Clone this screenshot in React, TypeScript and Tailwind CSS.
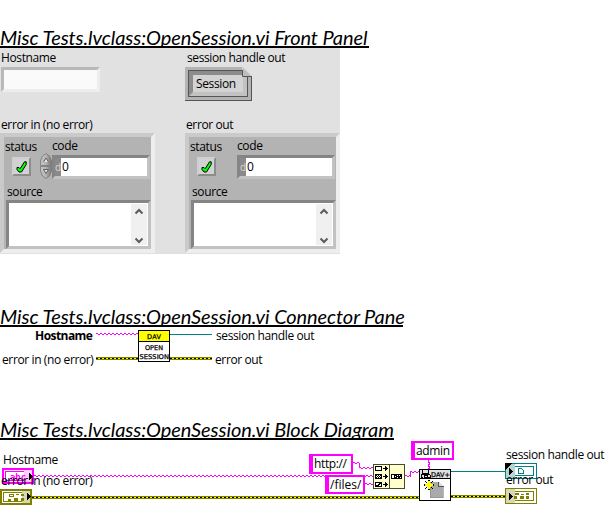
import React from "react";

const label = "block whitespace-pre font-['Open_Sans','Noto_Sans',sans-serif] text-[12px] leading-4 tracking-[-0.38px] text-black";

function Heading({ children, className }: { children: string; className: string }) {
  return (
    <h2
      className={`h-[22px] whitespace-pre border-b-2 border-black font-[Lato,'Open_Sans',sans-serif] text-[20px] italic leading-[23px] tracking-[-0.08px] text-black ${className}`}
    >
      {children}
    </h2>
  );
}

function Check() {
  return (
    <div className="flex h-[19px] w-[19px] items-center justify-center border-2 border-t-[#cfcfcf] border-l-[#cfcfcf] border-r-[#8c8c8c] border-b-[#8c8c8c] bg-[#d2d2d2]">
      <svg width="11" height="12" viewBox="0 0 11 12">
        <path d="M8.500 .8h1.700v2.700L5.500 11H3L1 8.500V6.500h2l1.200 1.200z" fill="#00ff00" stroke="#000" strokeWidth="1" />
      </svg>
    </div>
  );
}

function Spinner() {
  return (
    <svg width="12" height="26" viewBox="0 0 12 26" className="block">
      <defs>
        <linearGradient id="knob">
          <stop offset="0" stopColor="#c4c4c4" />
          <stop offset=".45" stopColor="#b8b8b8" />
          <stop offset="1" stopColor="#757575" />
        </linearGradient>
      </defs>
      <path d="M6 .5 9.500 3l2 5v4.500H.5V8l2-5zM.5 13.500h11V18l-2 5L6 25.500 2.500 23l-2-5z" fill="url(#knob)" stroke="#777" strokeWidth=".8" />
      <path d="M3.500 9 6 5l2.500 4M3.500 16.500h5L6 20.500z" fill="#e2e2e2" stroke="#555" strokeWidth=".9" />
    </svg>
  );
}

function ErrorCluster({ spinner }: { spinner?: boolean }) {
  return (
    <div className="h-[120px] w-[155px] border-4 border-t-[#cacaca] border-l-[#cacaca] border-r-[#eeeeee] border-b-[#eeeeee] bg-[#b3b3b3]">
      <div className="flex h-[45px]">
        <div className="w-9 pl-px pt-[2px]">
          <span className={`${label} tracking-[-0.2px]`}>status</span>
          <div className="pl-[7px] pt-[2px]"><Check /></div>
        </div>
        <div className="w-3 pt-[16px]">{spinner && <Spinner />}</div>
        <div className="w-[98px]">
          <span className={`${label} pt-px tracking-[-0.2px]`}>code</span>
          <div className="mt-px flex h-[24px] w-[98px] border-[3px] border-t-[#858585] border-l-[#858585] border-r-[#c2c2c2] border-b-[#c2c2c2] bg-white">
            <span className="h-full w-[6px] bg-[#8a8a8a] font-['Open_Sans',sans-serif] text-[10px] leading-[18px] text-[#d8d8d8]">d</span>
            <span className={`${label} pl-px leading-[18px]`}>0</span>
          </div>
        </div>
      </div>
      <span className={`${label} pl-[3px] pt-[2px] tracking-[-0.2px]`}>source</span>
      <div className="ml-[2px] flex h-[49px] w-[145px] justify-end border-[3px] border-t-[#858585] border-l-[#858585] border-r-[#c2c2c2] border-b-[#c2c2c2] bg-white py-px pr-px">
        <svg width="16" height="41" viewBox="0 0 16 41" className="block">
          <path d="M0 0h16v41H0z" fill="#f0f0f0" />
          <path d="M4.500 9.500 8 6l3.500 3.500M4.500 34.500 8 38l3.500-3.500" fill="none" stroke="#5c5c5c" strokeWidth="2" />
        </svg>
      </div>
    </div>
  );
}

function FrontPanel() {
  return (
    <div className="flex h-[206px] w-[340px] bg-[#e1e1e1]">
      <div className="w-[185px]">
        <span className={`${label} pl-px pt-[2px] tracking-[-0.3px]`}>Hostname</span>
        <div className="ml-px mt-px h-[25px] w-[99px] border-[3px] border-t-[#b8b8b8] border-l-[#b8b8b8] border-r-[#ededed] border-b-[#ededed] bg-[#fafafa]" />
        <span className={`${label} mt-[25px] pl-px`}>error in (no error)</span>
        <ErrorCluster spinner />
      </div>
      <div className="w-[155px]">
        <span className={`${label} pl-[2px] pt-[2px]`}>session handle out</span>
        <div className="relative mt-px h-[34px] w-[67px] border-b border-r border-[#555] bg-[#b3b3b3] p-[3px]">
          <div className="h-full w-full border border-[#555] bg-[#d3d3d3]">
            <div className="h-full w-full border-[4px] border-t-[#8c8c8c] border-l-[#8c8c8c] border-r-[#c2c2c2] border-b-[#c2c2c2]">
              <span className={`${label} pl-[3px] leading-[17px]`}>Session</span>
            </div>
          </div>
          <svg width="10" height="10" viewBox="0 0 10 10" className="absolute right-[-1px] top-0">
            <path d="M0 0h10v10H0z" fill="#e1e1e1" />
            <path d="M.5 0v9.500H10z" fill="#bdbdbd" />
            <path d="M.5 3v6.500H10" fill="none" stroke="#555" />
          </svg>
        </div>
        <span className={`${label} mt-[16px] pl-px`}>error out</span>
        <ErrorCluster />
      </div>
    </div>
  );
}

function Patterns() {
  return (
    <defs>
      <pattern id="err" width="4" height="3" patternUnits="userSpaceOnUse">
        <path d="M0 0h4v3H0z" fill="#808000" />
        <path d="M0 1h2v1H0z" fill="#000" />
        <path d="M2 1h2v1H2z" fill="#ff0" />
      </pattern>
      <pattern id="str" width="4" height="2" patternUnits="userSpaceOnUse">
        <path d="M0 0h2v1H0zM2 1h2v1H2z" fill="#f0f" />
      </pattern>
    </defs>
  );
}

function ErrWire({ x, y, w }: { x: number; y: number; w: number }) {
  return <rect width={w} height="3" transform={`translate(${x} ${y})`} fill="url(#err)" />;
}

function StrWire({ x, y, w }: { x: number; y: number; w: number }) {
  return <rect width={w} height="2" transform={`translate(${x} ${y})`} fill="url(#str)" />;
}

const tiny = "font-['DejaVu_Sans',sans-serif]";

function ConnectorPane() {
  return (
    <div className="flex h-[40px] pt-px">
      <div className="flex w-[96px] flex-col gap-2 pl-[2px]">
        <span className={`${label} pl-[33px] font-bold tracking-[-0.55px]`}>Hostname</span>
        <span className={label}>error in (no error)</span>
      </div>
      <svg width="116" height="39" viewBox="96 1 116 39" className="block shrink-0" shapeRendering="crispEdges">
        <Patterns />
        <StrWire x={96} y={6} w={42} />
        <path d="M170 7.500h42" stroke="#008080" />
        <ErrWire x={96} y={30} w={42} />
        <ErrWire x={170} y={30} w={42} />
        <path d="M138.500 3.500h31v31h-31z" fill="#fff" stroke="#000" />
        <path d="M139 4h30v10h-30z" fill="#ff0" />
        <path d="M139 14.500h30" stroke="#000" />
        <text x="147" y="12" textLength="14" stroke="#000" strokeWidth=".25" className={`${tiny} text-[6.5px]`}>DAV</text>
        <text x="145" y="23" textLength="18" stroke="#000" strokeWidth=".25" className={`${tiny} text-[6.5px]`}>OPEN</text>
        <text x="139.500" y="32" textLength="29.500" lengthAdjust="spacingAndGlyphs" stroke="#000" strokeWidth=".25" className={`${tiny} text-[6.5px]`}>SESSION</text>
      </svg>
      <div className="flex flex-col gap-2 pl-[3px]">
        <span className={`${label} pl-px`}>session handle out</span>
        <span className={label}>error out</span>
      </div>
    </div>
  );
}

function BlockDiagram() {
  return (
    <div className="relative h-[90px] w-[606px]">
      <svg width="606" height="90" viewBox="0 440 606 90" className="absolute left-0 top-0" shapeRendering="crispEdges">
        <StrWire x={34} y={475} w={339} />
        <StrWire x={353} y={462} w={6} />
        <path d="M359.500 463v5" stroke="#f0f" />
        <StrWire x={359} y={467} w={14} />
        <StrWire x={365} y={483} w={8} />
        <StrWire x={405} y={475} w={5} />
        <path d="M410.500 472v5" stroke="#f0f" />
        <StrWire x={410} y={471} w={9} />
        <path d="M428.500 460v2h1v2h-1v2h1v2h-1v1" fill="none" stroke="#f0f" />
        <path d="M451 471.500h54" stroke="#008080" />
        <ErrWire x={32} y={496} w={387} />
        <ErrWire x={451} y={495} w={54} />

        {/* string control */}
        <path d="M3 469h30v14H3z" fill="#fff" stroke="#f0f" strokeWidth="2" />
        <path d="M5.500 471.500h25v9h-25z" fill="none" stroke="#f0f" />
        <path d="M24 470h8v12h-8z" fill="#fcf" />
        <text x="10" y="480" textLength="16" lengthAdjust="spacingAndGlyphs" fill="#f0f" className="font-['DejaVu_Sans_Mono',monospace] text-[9px] font-bold">abc</text>
        <path d="M29 473v7l4-3.500z" />

        {/* error control */}
        <path d="M1 490h30v14H1z" fill="#fff" stroke="#808000" strokeWidth="2" />
        <path d="M3.500 492.500h25v9h-25z" fill="none" stroke="#808000" />
        <path d="M22 491h8v12h-8z" fill="#d8d8b0" />
        <path d="M9.500 494.500h4v2h-4z" fill="none" stroke="#808000" />
        <path d="M16 494h3v1h-3zM8 499h3v2H8zM14 498h4v3h-4zM21 494h3v2h-3zM21 498h3v3h-3z" fill="#808000" />
        <path d="M27 493v7l3.500-3.500z" />

        {/* concatenate strings */}
        <path d="M373.500 464.500h31v24h-31z" fill="#ffc" stroke="#4a4a30" />
        <path d="M389.500 465v23" stroke="#4a4a30" />
        <path d="M375.500 466.500h6v4h-6zM375.500 474.500h6v4h-6zM375.500 482.500h6v4h-6z" fill="#fff" stroke="#000" />
        <path d="M376 475h1v1h1v1h-1v1h-1v-1h1v-1h-1zM378 475h1v1h1v1h-1v1h-1v-1h1v-1h-1zM380 475h1v1h-1zM380 477h1v1h-1zM379 483h2v1h-2zM378 484h2v1h-2zM376 485h3v1h-3z" />
        <path d="M383 468h2v-2h1v1h1v1h1v1h-1v1h-1v1h-1v-2h-2zM383 476h2v-2h1v1h1v1h1v1h-1v1h-1v1h-1v-2h-2zM383 484h2v-2h1v1h1v1h1v1h-1v1h-1v1h-1v-2h-2z" />
        <path d="M391.500 474.500h10v4h-10zM394.500 474v5M398.500 474v5" fill="#fff" stroke="#000" />
        <path d="M395 475h2v1h-2zM396 476h2v1h-2zM395 477h2v1h-2zM400 475h2v1h-2zM399 476h2v1h-2zM399 477h1v1h-1z" />

        {/* DAV subVI */}
        <path d="M419.500 469.500h31v31h-31z" fill="#fff" stroke="#000" />
        <path d="M420 470h30v8h-30z" fill="#e0e0e0" />
        <path d="M420 478.500h30" stroke="#000" />
        <path d="M422.500 470v3h6v-3M424.500 475.500h3v2h-3zM421 474.500h9M421 475v2h2M430 475v2h-2" fill="none" stroke="#000" />
        <text x="431" y="476.500" textLength="19" stroke="#000" strokeWidth=".25" className={`${tiny} text-[6.5px]`}>DAV+</text>
        <path d="M430 482h8.500l4.500 4.500v11h-13z" fill="#aaa" />
        <path d="M430.500 482v15.500h12.500v-11.500" fill="none" stroke="#888" strokeWidth=".6" />
        <path d="M438.500 481.500v5h5" fill="#ddd" stroke="#555" />
        <path d="M425 481l3 3M433 481l-3 3M425 489l3-3M433 489l-3-3" stroke="#000" />
        <path d="M428 480h2v10h-2zM424 484h10v2h-10z" fill="#000" />
        <path d="M428 481h2v8h-2zM425 484h8v2h-8zM427 483h4v4h-4z" fill="#ff0" />

        {/* session indicator */}
        <path d="M505.500 463.500h31v15h-31z" fill="#fff" stroke="#008080" />
        <path d="M506 464h9v14h-9z" fill="#b5d5d5" />
        <path d="M515 466.500h18.500v9H515" fill="none" stroke="#008080" />
        <path d="M518.500 468.500h3l2 2v3h-5z" fill="none" stroke="#008080" />
        <path d="M505 463h7l-7 7zM509 468v7l4-3.500z" />

        {/* error indicator */}
        <path d="M505.500 488.500h31v15h-31z" fill="#fff" stroke="#808000" />
        <path d="M506 489h9v14h-9z" fill="#d8d8b0" />
        <path d="M515 491.500h18.500v9H515" fill="none" stroke="#808000" />
        <path d="M515 493h4v2h-4zM521 494h3v1h-3zM526 493h3v2h-3zM514 496h3v3h-3zM520 496h4v3h-4zM526 496h3v3h-3z" fill="#808000" />
        <path d="M509 493v7l4-3.500z" />
      </svg>
      <div className="absolute left-[309px] top-[14px] h-[20px] w-[44px] border-2 border-l-4 border-[#f0f] bg-white">
        <span className={`${label} pl-px leading-[16px] tracking-[-0.1px]`}>http://</span>
      </div>
      <div className="absolute left-[325px] top-[35px] h-[19px] w-[40px] border-2 border-l-4 border-[#f0f] bg-white">
        <span className={`${label} pl-px leading-[16px] tracking-[0px]`}>/files/</span>
      </div>
      <div className="absolute left-[411px] top-px h-[19px] w-[43px] border-2 border-l-4 border-[#f0f] bg-white">
        <span className={`${label} pl-px leading-[16px]`}>admin</span>
      </div>
      <span className={`${label} absolute left-[3px] top-[12px] tracking-[-0.3px]`}>Hostname</span>
      <span className={`${label} absolute left-px top-[33px]`}>error in (no error)</span>
      <span className={`${label} absolute left-[506px] top-[7px]`}>session handle out</span>
      <span className={`${label} absolute left-[506px] top-[32px]`}>error out</span>
    </div>
  );
}

export default function App() {
  return (
    <main className="h-[530px] w-[606px] overflow-hidden bg-white pt-[26px]">
      <Heading className="w-[369px]">Misc Tests.lvclass:OpenSession.vi Front Panel</Heading>
      <FrontPanel />
      <Heading className="mt-[51px] w-[403px]">Misc Tests.lvclass:OpenSession.vi Connector Pane</Heading>
      <ConnectorPane />
      <Heading className="mt-[51px] w-[394px]">Misc Tests.lvclass:OpenSession.vi Block Diagram</Heading>
      <BlockDiagram />
    </main>
  );
}
